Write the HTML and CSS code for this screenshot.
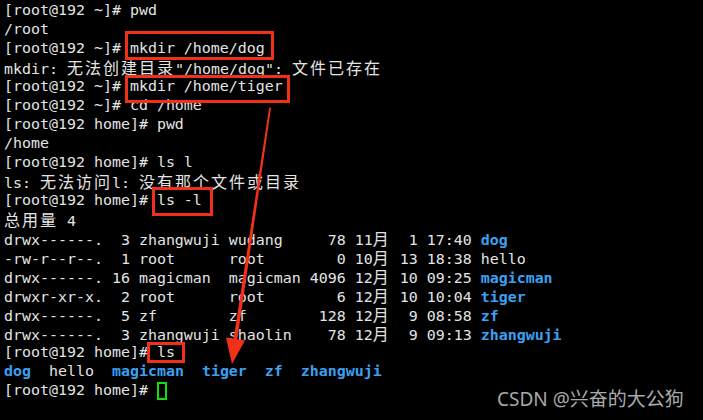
FILE: index.html
```html
<!DOCTYPE html>
<html>
<head>
<meta charset="utf-8">
<link rel="stylesheet" href="styles.css">
</head>
<body>
<div class="screen">
  <div class="term">
    <div class="ln">[root@192 ~]# pwd</div>
    <div class="ln">/root</div>
    <div class="ln">[root@192 ~]# mkdir /home/dog</div>
    <div class="ln">mkdir: <span class="c">无法创建目录</span>"/home/dog": <span class="c">文件已存在</span></div>
    <div class="ln">[root@192 ~]# mkdir /home/tiger</div>
    <div class="ln">[root@192 ~]# cd /home</div>
    <div class="ln">[root@192 home]# pwd</div>
    <div class="ln">/home</div>
    <div class="ln">[root@192 home]# ls l</div>
    <div class="ln">ls: <span class="c">无法访问</span>l: <span class="c">没有那个文件或目录</span></div>
    <div class="ln">[root@192 home]# ls -l</div>
    <div class="ln"><span class="c">总用量</span> 4</div>
    <div class="ln">drwx------.  3 zhangwuji wudang     78 11<span class="c">月</span>  1 17:40 <span class="d">dog</span></div>
    <div class="ln">-rw-r--r--.  1 root      root        0 10<span class="c">月</span> 13 18:38 hello</div>
    <div class="ln">drwx------. 16 magicman  magicman 4096 12<span class="c">月</span> 10 09:25 <span class="d">magicman</span></div>
    <div class="ln">drwxr-xr-x.  2 root      root        6 12<span class="c">月</span> 10 10:04 <span class="d">tiger</span></div>
    <div class="ln">drwx------.  5 zf        zf        128 12<span class="c">月</span>  9 08:58 <span class="d">zf</span></div>
    <div class="ln">drwx------.  3 zhangwuji shaolin    78 12<span class="c">月</span>  9 09:13 <span class="d">zhangwuji</span></div>
    <div class="ln">[root@192 home]# ls</div>
    <div class="ln"><span class="d">dog</span>  hello  <span class="d">magicman</span>  <span class="d">tiger</span>  <span class="d">zf</span>  <span class="d">zhangwuji</span></div>
    <div class="ln">[root@192 home]# <span class="cursor"></span></div>
  </div>

  <div class="mark m1"></div>
  <div class="mark m2"></div>
  <div class="mark m3"></div>
  <div class="mark m4"></div>

  <svg class="arrow" width="703" height="420" viewBox="0 0 703 420">
    <polygon points="269.2,107.5 271,107.8 237.3,339.5 233.6,339" fill="#f2301a"/>
    <polygon points="226,337.5 245,340.5 232,364" fill="#f2301a"/>
  </svg>

  <div class="watermark">CSDN @兴奋的大公狗</div>
</div>
</body>
</html>
```
FILE: styles.css
```css
html, body {
  margin: 0;
  padding: 0;
  background: #000;
}
.screen {
  position: relative;
  width: 703px;
  height: 420px;
  overflow: hidden;
  background: #000;
}
.term {
  padding: 1px 0 0 4px;
  font-family: "DejaVu Sans Mono", monospace;
  font-size: 14.95px;
  color: #e4e4e4;
}
.ln {
  height: 19px;
  line-height: 19px;
  white-space: pre;
}
.c {
  font-family: "Noto Sans CJK SC", sans-serif;
  font-size: 16px;
  letter-spacing: 2px;
  line-height: 19px;
}
.d {
  color: #3ba0f2;
  font-weight: bold;
}
.cursor {
  display: inline-block;
  box-sizing: border-box;
  width: 10px;
  height: 18px;
  border: 2px solid #10e010;
  vertical-align: top;
  margin-top: 1px;
}
.mark {
  position: absolute;
  box-sizing: border-box;
  border: 3px solid #f2301a;
}
.m1 { left: 125px; top: 31px; width: 149px; height: 29px; }
.m2 { left: 125px; top: 75px; width: 165px; height: 28px; }
.m3 { left: 152px; top: 187px; width: 61px; height: 29px; }
.m4 { left: 147px; top: 342px; width: 38px; height: 21px; }
.arrow {
  position: absolute;
  left: 0;
  top: 0;
}
.watermark {
  position: absolute;
  left: 497px;
  top: 386px;
  font-family: "Noto Sans", "Noto Sans CJK SC", sans-serif;
  font-size: 19px;
  line-height: 26px;
  color: #a9a9a9;
  white-space: nowrap;
}
```
